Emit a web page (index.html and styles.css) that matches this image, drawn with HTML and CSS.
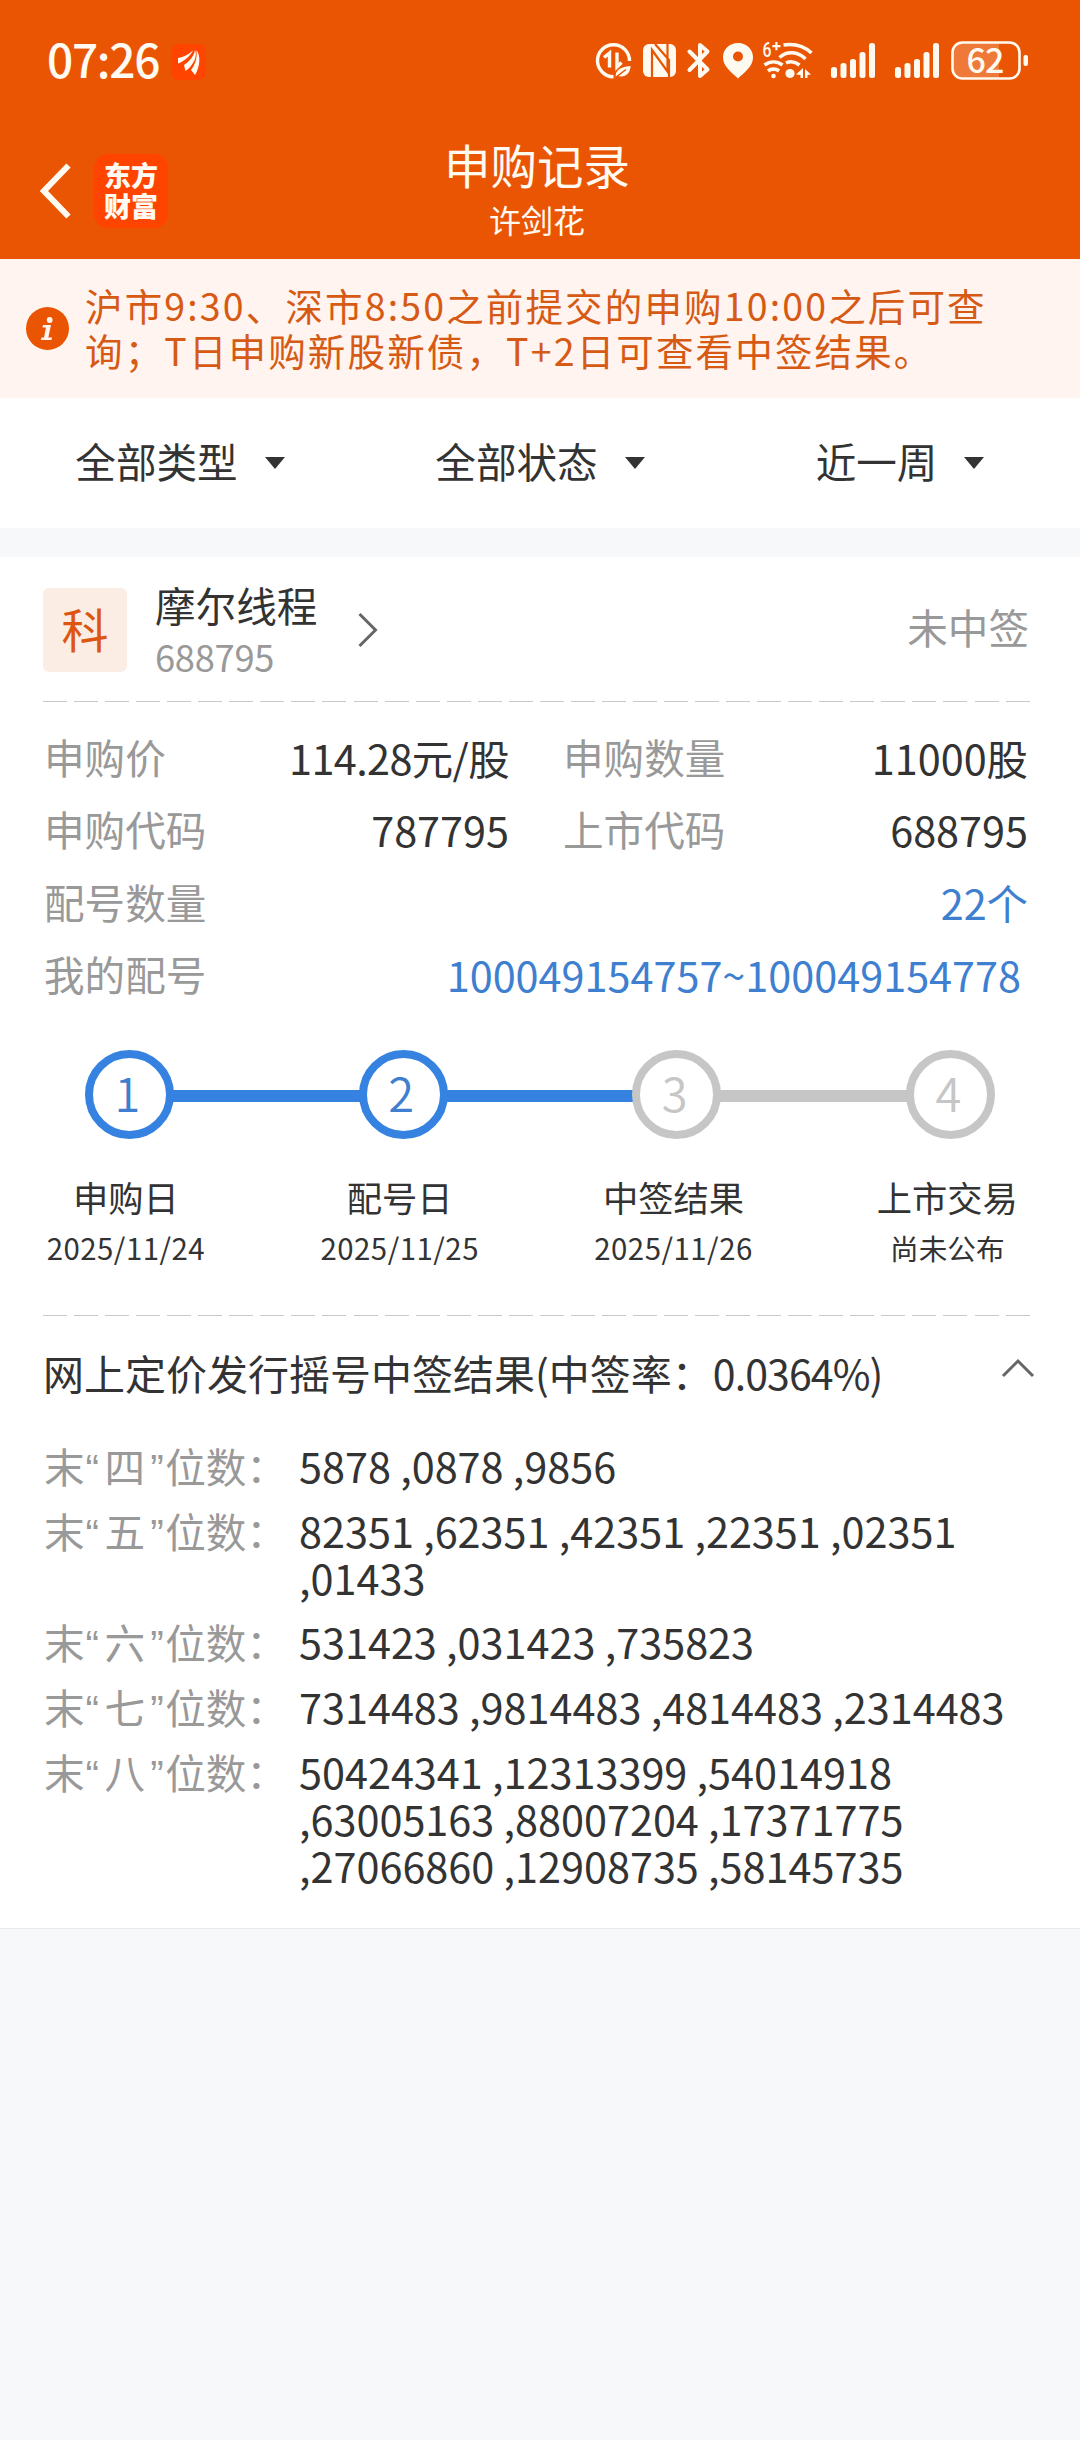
FILE: index.html
```html
<!DOCTYPE html>
<html lang="zh-CN">
<head>
<meta charset="utf-8">
<title>申购记录</title>
<link rel="stylesheet" href="styles.css">
</head>
<body>
<header class="top">
  <div class="status">
    <span class="clock">07:26</span>
    <svg class="app-dot" width="35" height="36" viewBox="0 0 35 36">
      <rect width="35" height="36" rx="7" fill="#ff4400"/>
      <g fill="#fffaf2">
        <path d="M7 14C13 13 18 10 22 6.500C20 11 14 17 7 19.500Z"/>
        <path d="M13 21C19 17 23 12 24 6C27 12 22 22 14.500 27Z"/>
        <path d="M25.500 6C30 12 29 23 24 31L20 26C24 21 26.500 14 25.500 6Z"/>
      </g>
    </svg>
    <svg class="status-icons" width="440" height="60" viewBox="590 28 440 60" fill="none" stroke="#fffaf0">
      <path d="M629.500 61A16 16 0 1 0 613.500 76.700" stroke-width="3.400"/>
      <path d="M604 57.500L609.500 53V67.500M617 52.500V67L621.500 62.500" stroke-width="3.400"/>
      <path d="M615 78C614 69 621 66 631.500 65C631 74 626 79 617 76.500L626 69.500" fill="#fffaf0" stroke="#ea5504" stroke-width="1.500"/>
      <rect x="643" y="44" width="33" height="33" rx="6" fill="#fffaf0" stroke="none"/>
      <path d="M652 77V50L667.500 71.500V44M655 44L669 60V77" stroke="#ea5504" stroke-width="2.200"/>
      <path d="M689.500 51.500L707.500 69.500L700 76V45L707.500 51.500L689.500 70" stroke-width="4" stroke-linejoin="round" stroke-linecap="round"/>
      <path fill-rule="evenodd" d="M738 43C729 43 723 49.500 723 57.500C723 66 731 72 738 78.500C745 72 753 66 753 57.500C753 49.500 747 43 738 43ZM738 51.500A5 5 0 1 1 738 61.500A5 5 0 1 1 738 51.500Z" fill="#fffaf0" stroke="none"/>
      <g stroke-width="3.600">
        <path d="M783.500 45C794 43.500 804 46 811.500 53"/>
        <path d="M779.500 57.500C787 50.500 798 51.500 805.500 59"/>
        <path d="M764.500 65C770 61 777 61 782.500 65"/>
        <path d="M768 71C771 68.500 776 68.500 779 71"/>
        <path d="M786 63C791 60.500 795 61.500 799.500 65"/>
      </g>
      <g fill="#fffaf0" stroke="none">
        <circle cx="773.500" cy="76" r="2.300"/>
        <circle cx="790" cy="73.500" r="4.600"/>
        <path d="M796 74.500L803 68V78H800.500V75ZM805 69L811 74.500L807.500 75V78H805Z"/>
        <text x="762.500" y="56.500" class="wifi-tag" textLength="9" lengthAdjust="spacingAndGlyphs">6</text>
        <path d="M775.300 42H777.500V45H780.500V47.200H777.500V50.200H775.300V47.200H772.300V45H775.300Z"/>
        <rect x="831" y="67" width="6" height="11" rx="2.500"/><rect x="840.500" y="63" width="6" height="15" rx="2.500"/><rect x="850" y="59" width="6" height="19" rx="2.500"/><rect x="859.500" y="52" width="6" height="26" rx="2.500"/><rect x="869" y="43" width="6" height="35" rx="2.500"/>
        <rect x="895" y="67" width="6" height="11" rx="2.500"/><rect x="904.500" y="63" width="6" height="15" rx="2.500"/><rect x="914" y="59" width="6" height="19" rx="2.500"/><rect x="923.500" y="52" width="6" height="26" rx="2.500"/><rect x="933" y="43" width="6" height="35" rx="2.500"/>
        <path d="M963 43H999V78H963Q953 78 953 68V53Q953 43 963 43Z" opacity=".22"/>
        <rect x="1023.500" y="55" width="4.500" height="11" rx="2"/>
        <text x="985" y="72.500" text-anchor="middle" class="battery-text">62</text>
      </g>
      <rect x="952.500" y="42.500" width="67" height="36" rx="10" stroke-width="2.600"/>
    </svg>
  </div>
  <div class="nav">
    <div class="nav-left">
      <svg width="32" height="56" viewBox="0 0 32 56" fill="none" stroke="#fffaf2" stroke-width="6"><path d="M28.500 2.500L4 28L28.500 53.500"/></svg>
      <div class="brand">东方<br>财富</div>
    </div>
    <div class="nav-title">
      <h1>申购记录</h1>
      <p>许剑花</p>
    </div>
  </div>
</header>

<section class="notice">
  <svg width="43" height="43" viewBox="0 0 43 43">
    <circle cx="21.500" cy="21.500" r="21.500" fill="#ea5504"/>
    <g fill="#fff4ef"><circle cx="23.700" cy="13" r="2.900"/><path d="M17 18H25L22.300 30.500H26L25.500 33H15L15.500 30.500H18L20 20.500H16.500Z"/></g>
  </svg>
  <p>沪市9:30、深市8:50之前提交的申购10:00之后可查<br>询；T日申购新股新债，T+2日可查看中签结果。</p>
</section>

<nav class="filters">
  <div class="filter">全部类型<i></i></div>
  <div class="filter">全部状态<i></i></div>
  <div class="filter">近一周<i></i></div>
</nav>

<main class="card">
  <div class="stock">
    <span class="badge">科</span>
    <div class="stock-name"><b>摩尔线程</b><span>688795</span></div>
    <svg width="22" height="36" viewBox="0 0 22 36" fill="none" stroke="#666" stroke-width="3"><path d="M2.500 2L18.500 18L2.500 34"/></svg>
    <span class="result">未中签</span>
  </div>
  <div class="dash"></div>
  <div class="info">
    <div class="cell"><span>申购价</span><em class="price">114.28元/股</em></div>
    <div class="cell"><span>申购数量</span><em>11000股</em></div>
    <div class="cell"><span>申购代码</span><em>787795</em></div>
    <div class="cell"><span>上市代码</span><em>688795</em></div>
    <div class="cell wide link"><span>配号数量</span><em>22个</em></div>
    <div class="cell wide link range"><span>我的配号</span><em>100049154757~100049154778</em></div>
  </div>
  <div class="track">
    <span class="node on">1</span><span class="bar on"></span>
    <span class="node on">2</span><span class="bar on"></span>
    <span class="node">3</span><span class="bar"></span>
    <span class="node">4</span>
  </div>
  <div class="labels">
    <div><b>申购日</b><span>2025/11/24</span></div>
    <div><b>配号日</b><span>2025/11/25</span></div>
    <div><b>中签结果</b><span>2025/11/26</span></div>
    <div><b>上市交易</b><span class="pending">尚未公布</span></div>
  </div>
  <div class="dash"></div>
  <div class="lottery-head">
    <h2>网上定价发行摇号中签结果(中签率：<span>0.0364%)</span></h2>
    <svg width="34" height="22" viewBox="0 0 34 22" fill="none" stroke="#666" stroke-width="3"><path d="M2 19L17 4L32 19"/></svg>
  </div>
  <dl class="lottery">
    <dt>末<q>“</q>四<q class="close">”</q>位数：</dt><dd>5878 ,0878 ,9856</dd>
    <dt>末<q>“</q>五<q class="close">”</q>位数：</dt><dd>82351 ,62351 ,42351 ,22351 ,02351 ,01433</dd>
    <dt>末<q>“</q>六<q class="close">”</q>位数：</dt><dd>531423 ,031423 ,735823</dd>
    <dt>末<q>“</q>七<q class="close">”</q>位数：</dt><dd>7314483 ,9814483 ,4814483 ,2314483</dd>
    <dt>末<q>“</q>八<q class="close">”</q>位数：</dt><dd>50424341 ,12313399 ,54014918 ,63005163 ,88007204 ,17371775 ,27066860 ,12908735 ,58145735</dd>
  </dl>
</main>
</body>
</html>
```
FILE: styles.css
```css
* { box-sizing: border-box; margin: 0; padding: 0; }
body {
  width: 1080px;
  min-height: 2440px;
  background: #f7f8fa;
  color: #333;
  font: 400 40.6px/1 "Noto Sans CJK SC", sans-serif;
}
b, em, i, h1, h2 { font-weight: 400; font-style: normal; }

.top { height: 259px; background: #ea5504; color: #fffaf2; }
.status { display: flex; align-items: flex-start; height: 120px; padding: 28px 50px 0 47px; }
.clock { width: 124px; padding-top: 9px; font-size: 46px; font-weight: 500; letter-spacing: -1.3px; line-height: 42px; }
.app-dot { margin-top: 16px; }
.status-icons { margin-left: auto; }
.wifi-tag { font: 500 20px Roboto, sans-serif; }
.battery-text { font: 500 34px "Noto Sans CJK SC", sans-serif; letter-spacing: -1px; }

.nav { display: grid; grid-template-columns: 1fr 260px 1fr; height: 139px; }
.nav-left { display: flex; align-items: center; gap: 22px; height: 141px; padding-left: 40px; }
.brand {
  width: 74px; height: 74px; padding-top: 5px;
  border-radius: 14px; background: #ff4400;
  font-size: 27px; font-weight: 900; line-height: 31px; text-align: center;
}
.nav-title { padding: 14px 6px 0 0; text-align: center; }
.nav-title h1 { font-size: 46.5px; line-height: 60px; }
.nav-title p { font-size: 32px; line-height: 51px; }

.notice { display: flex; gap: 16px; height: 139px; padding: 24px 0 0 26px; background: #fff4ef; color: #d65a14; }
.notice svg { flex: none; margin-top: 24px; }
.notice p { font-size: 37.5px; letter-spacing: 2.15px; line-height: 44.5px; white-space: nowrap; }

.filters { display: grid; grid-template-columns: repeat(3, 1fr); height: 130px; margin-bottom: 29px; background: #fff; }
.filter { display: flex; align-items: center; justify-content: center; gap: 27px; padding-bottom: 3px; }
.filter i { margin-top: 3px; border: 10px solid transparent; border-top: 12px solid #333; border-bottom: 0; }

.card { height: 1372px; padding: 30px 50px 0 43px; background: #fff; border-bottom: 1px solid #e9eaec; }
.stock { display: flex; height: 114px; }
.badge {
  width: 84px; height: 84px; margin: 1px 28px 0 0;
  border-radius: 6px; background: #fcede4; color: #dd5611;
  font-size: 47px; line-height: 79px; text-align: center;
}
.stock-name { display: flex; flex-direction: column; width: 202px; }
.stock-name b { line-height: 36px; }
.stock-name span { color: #999; font-size: 36.3px; letter-spacing: -.3px; line-height: 67px; }
.stock svg { margin-top: 25px; }
.result { margin-right: 1px; margin-left: auto; line-height: 80px; color: #999; }
.dash {
  height: 1px; margin-right: -1px;
  background: repeating-linear-gradient(90deg, #c9c9c9 0 24px, transparent 24px 31.05px);
}

.info { display: grid; grid-template-columns: 465px 465px; column-gap: 54px; grid-auto-rows: 72.3px; padding: 19px 0 0 1px; line-height: 72px; }
.cell { display: flex; justify-content: space-between; }
.cell span { color: #999; }
.cell em { font-size: 41.4px; }
.cell .price { letter-spacing: -.6px; }
.wide { grid-column: 1 / -1; }
.link em { color: #3e80cf; }
.range { padding-right: 7px; }

.track { display: flex; align-items: center; margin-top: 40px; padding-left: 42px; }
.node {
  width: 89px; height: 89px; padding-right: 4px;
  border: 8.5px solid #c6c6c6; border-radius: 50%; color: #c6c6c6;
  font-size: 47px; font-weight: 350; line-height: 68px; text-align: center;
}
.node.on { border-color: #3582e0; color: #3e80cf; }
.bar { width: 187px; height: 12px; margin: 3px -1.2px 0; background: #c6c6c6; }
.bar.on { background: #3582e0; }

.labels { display: grid; grid-template-columns: repeat(4, 273.8px); width: 1096px; height: 176px; margin-left: -54px; padding-top: 34px; text-align: center; }
.labels div { display: flex; flex-direction: column; }
.labels b { font-size: 35.3px; line-height: 48px; }
.labels span { font-size: 29.4px; letter-spacing: .5px; line-height: 53px; }
.labels .pending { font-size: 28.6px; letter-spacing: 0; }

.lottery-head { display: flex; align-items: center; justify-content: space-between; height: 112px; margin-right: -5px; }
.lottery-head h2 { font-size: 41px; }
.lottery-head h2 span { letter-spacing: -.9px; }
.lottery-head svg { margin-bottom: 8px; }
.lottery { display: grid; grid-template-columns: 255px 1fr; row-gap: 17.2px; padding: 14px 0 0 1px; line-height: 47px; }
.lottery dt { color: #999; white-space: nowrap; }
.lottery dd { font-size: 41.4px; }
.lottery q { display: inline-block; width: 20px; padding-left: 1px; font-family: "Liberation Sans", sans-serif; line-height: 1; quotes: none; }
.lottery .close { padding-left: 5px; }
```
